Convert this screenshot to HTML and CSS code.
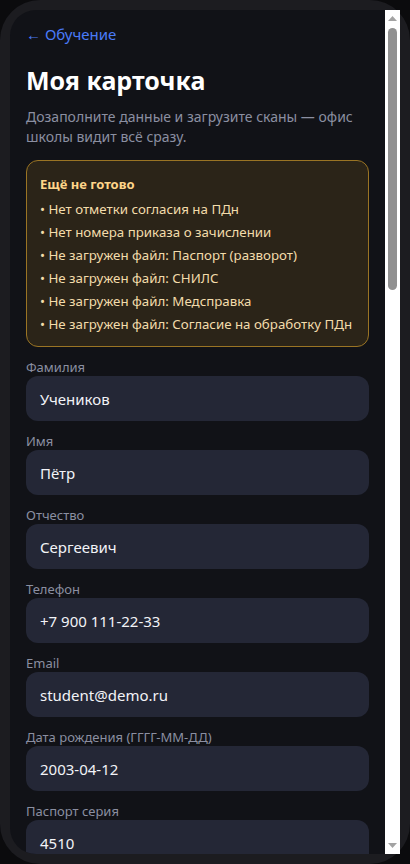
FILE: index.html
```html
<!DOCTYPE html>
<html lang="ru">
<head>
<meta charset="utf-8">
<title>Моя карточка</title>
<link rel="stylesheet" href="styles.css">
</head>
<body>
<div class="phone">
  <div class="screen">
    <div class="viewport">
    <div class="content">
      <a class="back" href="#">← Обучение</a>
      <h1 class="title">Моя карточка</h1>
      <p class="subtitle">Дозаполните данные и загрузите сканы — офис школы видит всё сразу.</p>

      <div class="warning">
        <div class="warning-title">Ещё не готово</div>
        <ul class="warning-list">
          <li>• Нет отметки согласия на ПДн</li>
          <li>• Нет номера приказа о зачислении</li>
          <li>• Не загружен файл: Паспорт (разворот)</li>
          <li>• Не загружен файл: СНИЛС</li>
          <li>• Не загружен файл: Медсправка</li>
          <li>• Не загружен файл: Согласие на обработку ПДн</li>
        </ul>
      </div>

      <div class="field"><label class="label">Фамилия</label><div class="input">Учеников</div></div>
      <div class="field"><label class="label">Имя</label><div class="input">Пётр</div></div>
      <div class="field"><label class="label">Отчество</label><div class="input">Сергеевич</div></div>
      <div class="field"><label class="label">Телефон</label><div class="input">+7 900 111-22-33</div></div>
      <div class="field"><label class="label">Email</label><div class="input">student@demo.ru</div></div>
      <div class="field"><label class="label">Дата рождения (ГГГГ-ММ-ДД)</label><div class="input">2003-04-12</div></div>
      <div class="field"><label class="label">Паспорт серия</label><div class="input">4510</div></div>
    </div>
    </div>
    <div class="scrollbar" aria-hidden="true">
      <div class="sb-btn"><svg width="9" height="5" viewBox="0 0 9 5"><polygon points="0,5 4.5,0 9,5" fill="#a3a3a3"/></svg></div>
      <div class="sb-thumb"></div>
      <div class="sb-space"></div>
      <div class="sb-btn"><svg width="9" height="5" viewBox="0 0 9 5"><polygon points="0,0 4.5,5 9,0" fill="#a3a3a3"/></svg></div>
    </div>
  </div>
</div>
</body>
</html>
```
FILE: styles.css
```css
* { box-sizing: border-box; }
html, body { margin: 0; padding: 0; }
body {
  background: #0b0b0d;
  font-family: "Noto Sans", "Open Sans", sans-serif;
  width: 410px;
  height: 864px;
  overflow: hidden;
}
.phone {
  width: 410px;
  height: 864px;
  border-radius: 40px;
  background: #1c1c20;
  padding: 10px;
}
.screen {
  height: 844px;
  display: flex;
  background: #111217;
  border-radius: 26px 0 0 26px;
  overflow: hidden;
}
.viewport {
  flex: 1;
  min-width: 0;
  overflow: hidden;
}
.scrollbar {
  width: 15px;
  flex: none;
  background: #ffffff;
  display: flex;
  flex-direction: column;
}
.sb-btn {
  height: 17px;
  display: flex;
  align-items: center;
  justify-content: center;
}
.sb-btn svg { display: block; }
.sb-thumb {
  margin: 1px 3px 0;
  height: 262px;
  border-radius: 5px;
  background: #919191;
}
.sb-space { flex: 1; }
.content {
  padding: 14px 16px 0;
}
.back {
  display: block;
  color: #4a7bf7;
  text-decoration: none;
  font-size: 15px;
  line-height: 20px;
}
.title {
  margin: 20px 0 0;
  font-size: 25px;
  line-height: 32px;
  font-weight: 700;
  color: #ffffff;
}
.subtitle {
  margin: 11px 0 0;
  font-size: 14px;
  line-height: 20px;
  color: #8b8fa1;
}
.warning {
  margin-top: 13px;
  border: 1px solid #9a7424;
  background: #2b2418;
  border-radius: 12px;
  padding: 13px 13px 10px;
}
.warning-title {
  font-size: 13px;
  line-height: 20px;
  font-weight: 700;
  color: #ffd58a;
}
.warning-list {
  list-style: none;
  margin: 4px 0 0;
  padding: 0;
  font-size: 13.3px;
  line-height: 23px;
  color: #f3dcab;
}
.field {
  margin-top: 11px;
}
.label {
  display: block;
  font-size: 13px;
  line-height: 18px;
  color: #8b8fa1;
}
.input {
  height: 45px;
  border-radius: 12px;
  background: #242736;
  padding: 0 14px;
  display: flex;
  align-items: center;
  font-size: 15px;
  color: #f2f3f7;
}
```
